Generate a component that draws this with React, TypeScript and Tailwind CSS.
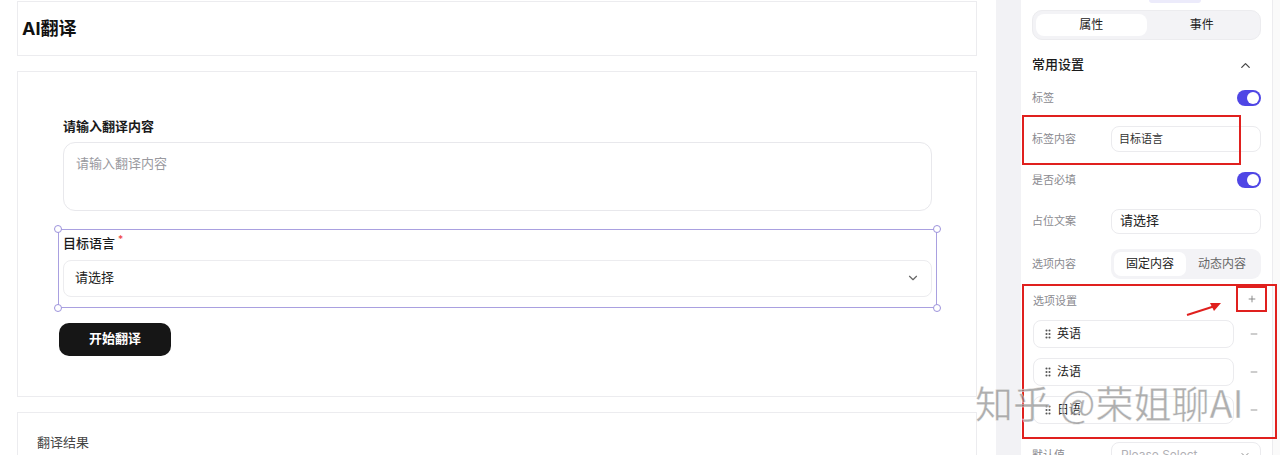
import { ChevronDown, ChevronUp, GripVertical, Minus, Plus } from 'lucide-react';

const font = { fontFamily: 'Inter, "Noto Sans CJK SC", sans-serif' };

const Toggle = () => (
  <div className="flex items-center justify-end bg-[#4f46e5] rounded-full w-[24px] h-[16px] px-[2px]">
    <div className="bg-white rounded-full w-[12px] h-[12px]" />
  </div>
);

const Handle = ({ className }: { className: string }) => (
  <span
    className={`absolute w-[8px] h-[8px] rounded-full bg-white border border-[#9d93dc] ${className}`}
  />
);

const Row = ({ label, children }: { label: string; children?: React.ReactNode }) => (
  <div className="flex items-center justify-between h-[26px]">
    <span className="text-[11px] text-[#8a8a8f]">{label}</span>
    {children}
  </div>
);

const OptionItem = ({ name }: { name: string }) => (
  <div className="flex items-center gap-[15px]">
    <div className="flex items-center gap-[3px] w-[201px] h-[28px] border border-[#ebebee] rounded-[8px] px-[8px]">
      <GripVertical className="w-[12px] h-[12px] text-[#555]" strokeWidth={2.2} />
      <span className="text-[12px] text-[#222]">{name}</span>
    </div>
    <Minus className="w-[10px] h-[10px] text-[#888]" />
  </div>
);

export default function App() {
  return (
    <div className="flex h-[455px] w-[1280px] overflow-hidden bg-white relative" style={font}>
      {/* canvas */}
      <main className="flex flex-col gap-[15px] w-[997px] pl-[17px] pr-[19px] pt-[1px]">
        <section className="shrink-0 border border-[#ececef] h-[55px] flex items-center px-[4px]">
          <h1 className="text-[18px] font-bold text-[#111]">AI翻译</h1>
        </section>

        <section className="shrink-0 border border-[#ececef] h-[326px] pt-[45px] pl-[45px] pr-[44px]">
          <p className="text-[13px] font-semibold text-[#1a1a1a] mb-[5px]">请输入翻译内容</p>
          <div className="h-[69px] border border-[#e8e8ec] rounded-[12px] px-[12px] pt-[7px]">
            <span className="text-[13px] text-[#9a9a9f]">请输入翻译内容</span>
          </div>

          <div className="relative mt-[18px] -mx-[5px] h-[79px] border border-[#a9a0e0] px-[4px] pt-[4px]">
            <Handle className="-left-[5px] -top-[5px]" />
            <Handle className="-right-[5px] -top-[5px]" />
            <Handle className="-left-[5px] -bottom-[5px]" />
            <Handle className="-right-[5px] -bottom-[5px]" />
            <p className="text-[13px] font-medium text-[#1a1a1a] h-[20px] flex items-start">
              目标语言<span className="text-[#ef4444] text-[10px] ml-[3px] -mt-[2px]">*</span>
            </p>
            <div className="flex items-center justify-between h-[37px] mt-[6px] border border-[#ececef] rounded-[8px] px-[11px]">
              <span className="text-[13px] text-[#222]">请选择</span>
              <ChevronDown className="w-[14px] h-[14px] text-[#666]" />
            </div>
          </div>

          <button className="mt-[15px] -ml-[4px] w-[112px] h-[33px] rounded-[10px] bg-[#161616] text-white text-[13px] font-semibold">
            开始翻译
          </button>
        </section>

        <section className="shrink-0 border border-[#ececef] h-[60px] pt-[20px] px-[19px]">
          <p className="text-[13px] text-[#444]">翻译结果</p>
        </section>
      </main>

      <div className="w-[25px] bg-[#f2f2f5]" />

      {/* properties panel */}
      <aside className="relative w-[251px] px-[11px] pt-[10px]">
        <div className="absolute top-0 left-[128px] w-[52px] h-[3px] rounded-b-[3px] bg-[#ecebfb]" />
        <div className="flex h-[30px] p-[3px] bg-[#f3f3f6] rounded-[10px] border border-[#ececef]">
          <div className="flex-1 flex items-center justify-center bg-white rounded-[8px] text-[12px] text-[#222]">属性</div>
          <div className="flex-1 flex items-center justify-center text-[12px] text-[#222]">事件</div>
        </div>

        <div className="flex items-center justify-between mt-[15px] h-[20px]">
          <span className="text-[13px] font-medium text-[#1a1a1a]">常用设置</span>
          <ChevronUp className="w-[15px] h-[15px] text-[#444] mr-[8px]" />
        </div>

        <div className="mt-[10px] flex flex-col gap-[15px]">
          <Row label="标签">
            <Toggle />
          </Row>
          <div className="relative">
            <div className="absolute -left-[10px] -top-[11px] w-[219px] h-[50px] border-2 border-[#e0201e]" />
            <Row label="标签内容">
              <div className="w-[150px] h-[26px] border border-[#ebebee] rounded-[8px] px-[7px] flex items-center text-[11px] text-[#333]">
                目标语言
              </div>
            </Row>
          </div>
          <Row label="是否必填">
            <Toggle />
          </Row>
          <Row label="占位文案">
            <div className="w-[150px] h-[25px] border border-[#ebebee] rounded-[8px] px-[8px] flex items-center text-[13px] text-[#222]">
              请选择
            </div>
          </Row>
          <div className="flex items-center justify-between h-[30px]">
            <span className="text-[11px] text-[#8a8a8f]">选项内容</span>
            <div className="flex w-[150px] h-[30px] p-[3px] bg-[#f3f3f6] rounded-[9px]">
              <div className="flex-1 flex items-center justify-center bg-white rounded-[7px] text-[12px] text-[#222]">固定内容</div>
              <div className="flex-1 flex items-center justify-center text-[12px] text-[#666]">动态内容</div>
            </div>
          </div>
        </div>

        <div className="relative mt-[5px] -ml-[10px] w-[255px] h-[155px] border-2 border-[#e0201e] pl-[9px] pt-[5px]">
          <div className="flex items-center justify-between h-[20px] pr-[10px]">
            <span className="text-[11px] text-[#8a8a8f]">选项设置</span>
            <div className="relative flex items-center justify-center w-[31px] h-[26px] border-2 border-[#e0201e] -mt-[4px] -mr-[2px]">
              <Plus className="w-[10px] h-[10px] text-[#777]" />
            </div>
          </div>
          <svg className="absolute left-[161px] top-[14px]" width="40" height="18" viewBox="0 0 40 18">
            <path d="M2 15 L30 6" stroke="#e0201e" strokeWidth="2" />
            <path d="M36 3 L25 3 L29 11 Z" fill="#e0201e" />
          </svg>
          <div className="flex flex-col gap-[10px] mt-[9px]">
            <OptionItem name="英语" />
            <OptionItem name="法语" />
            <OptionItem name="日语" />
          </div>
        </div>

        <div className="flex items-center justify-between h-[26px] mt-[3px]">
          <span className="text-[11px] text-[#8a8a8f]">默认值</span>
          <div className="w-[150px] h-[26px] border border-[#ebebee] rounded-[8px] px-[9px] flex items-center justify-between">
            <span className="text-[12px] text-[#b0b0b5]">Please Select</span>
            <ChevronDown className="w-[12px] h-[12px] text-[#888]" />
          </div>
        </div>
      </aside>

      <div className="w-[8px] border-l border-[#ececef] bg-[#fafafa]" />

      {/* watermark */}
      <div
        className="absolute left-[975px] top-[383px] text-[38px] leading-none text-[#8c8c8c]/70 whitespace-nowrap pointer-events-none"
        style={{ fontFamily: '"Noto Sans CJK SC", sans-serif', WebkitTextStroke: '0.5px rgba(255,255,255,0.8)' }}
      >
        知乎 @荣姐聊AI
      </div>
    </div>
  );
}
